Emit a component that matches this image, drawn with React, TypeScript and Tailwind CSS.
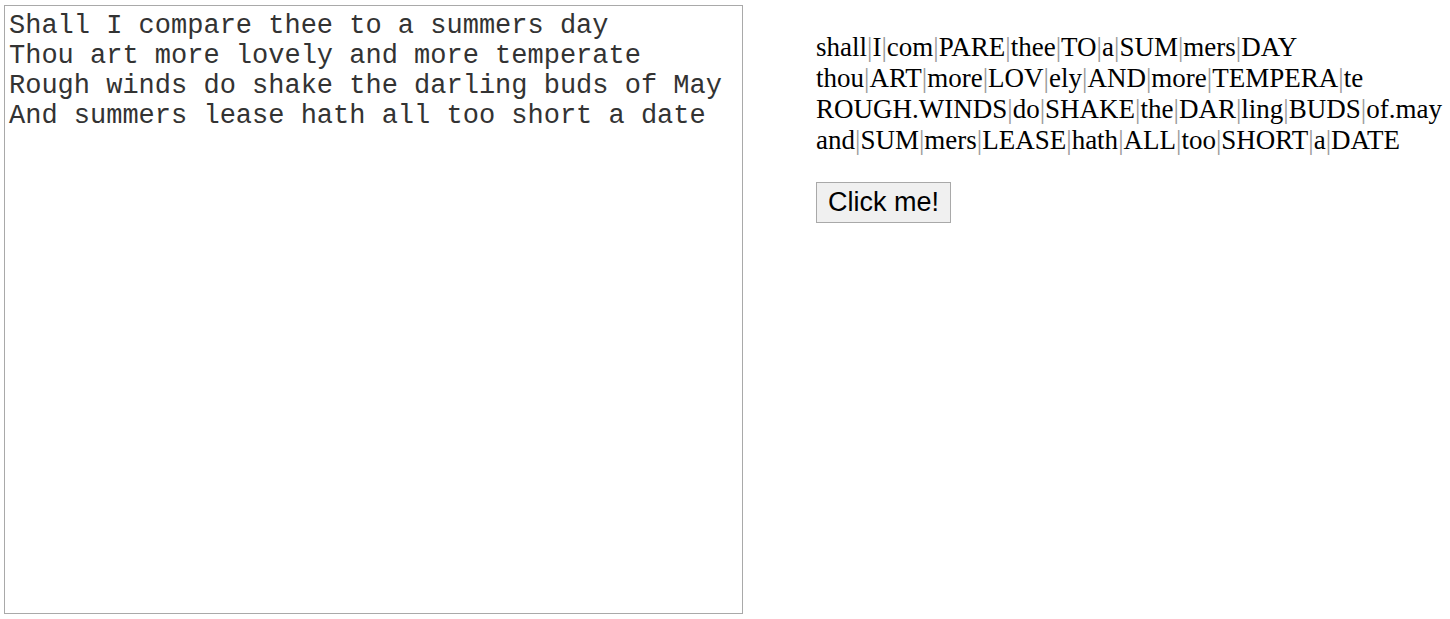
const poemLines = [
    'Shall I compare thee to a summers day',
    'Thou art more lovely and more temperate',
    'Rough winds do shake the darling buds of May',
    'And summers lease hath all too short a date',
];

const splitLines = [
    ['shall', 'I', 'com', 'PARE', 'thee', 'TO', 'a', 'SUM', 'mers', 'DAY'],
    ['thou', 'ART', 'more', 'LOV', 'ely', 'AND', 'more', 'TEMPERA', 'te'],
    ['ROUGH.WINDS', 'do', 'SHAKE', 'the', 'DAR', 'ling', 'BUDS', 'of.may'],
    ['and', 'SUM', 'mers', 'LEASE', 'hath', 'ALL', 'too', 'SHORT', 'a', 'DATE'],
];

export default function App() {
    return (
        <div className="flex items-start bg-white">
            <textarea
                className="ml-[4px] mt-[5px] h-[609px] w-[739px] resize-none border border-[#a9a9a9] pl-[4px] pt-[5px] pr-[2px] text-[27px] leading-[30px] text-[#333] outline-none"
                style={{ fontFamily: '"Liberation Mono", "Courier New", monospace' }}
                defaultValue={poemLines.join('\n')}
            />
            <div className="ml-[73px] flex flex-col pt-[32px]">
                <div className="text-[27px] leading-[31px] text-black" style={{ fontFamily: '"Liberation Serif", "Times New Roman", serif' }}>
                    {splitLines.map((line, i) => (
                        <div key={i} className="whitespace-nowrap">
                            {line.map((w, j) => (
                                <span key={j}>
                                    {j > 0 && <span className="text-[#999]">|</span>}
                                    {w}
                                </span>
                            ))}
                        </div>
                    ))}
                </div>
                <div className="mt-[26px]">
                    <button
                        className="h-[41px] w-[135px] border border-[#a9a9a9] bg-[#f0f0f0] text-[27px] leading-none text-black"
                        style={{ fontFamily: '"Liberation Sans", Arial, sans-serif' }}
                    >
                        Click me!
                    </button>
                </div>
            </div>
        </div>
    );
}
